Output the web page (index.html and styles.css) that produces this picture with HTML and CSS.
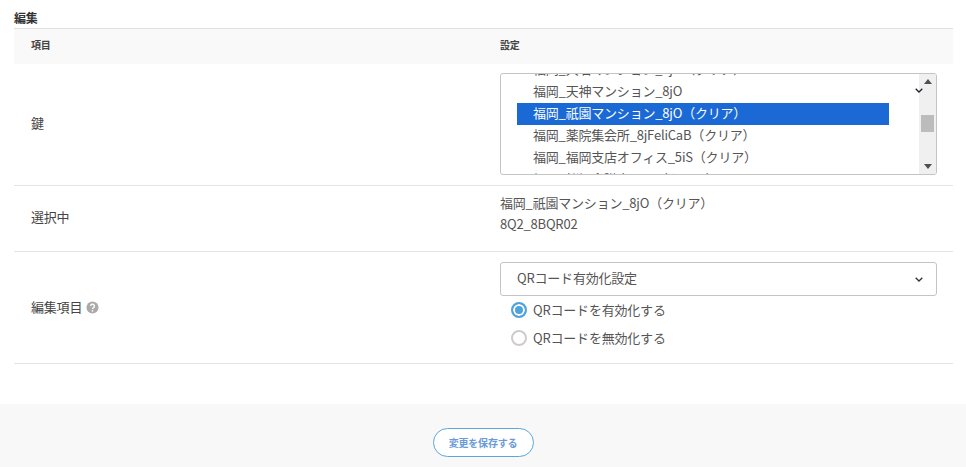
FILE: index.html
```html
<!DOCTYPE html>
<html lang="ja">
<head>
<meta charset="utf-8">
<title>編集</title>
<link rel="stylesheet" href="styles.css">
</head>
<body>
<main class="content">
  <h2 class="title">編集</h2>
  <div class="row head">
    <div class="label">項目</div>
    <div class="value">設定</div>
  </div>
  <div class="row row-key">
    <div class="label">鍵</div>
    <div class="value">
      <div class="listbox">
        <div class="list-view">
          <ul class="options">
            <li>福岡_大名マンション_8jO（クリア）</li>
            <li>福岡_天神マンション_8jO</li>
            <li class="selected">福岡_祇園マンション_8jO（クリア）</li>
            <li>福岡_薬院集会所_8jFeliCaB（クリア）</li>
            <li>福岡_福岡支店オフィス_5iS（クリア）</li>
            <li>福岡_桜坂会議室_5iS（クリア）</li>
          </ul>
        </div>
        <svg class="chev chev-list" viewBox="0 0 8 5"><path d="M.7.7L4 4 7.3.7" fill="none" stroke="#223" stroke-width="1.3"/></svg>
        <div class="scrollbar">
          <svg class="arrow" viewBox="0 0 8 5"><path d="M4 0l4 5H0z" fill="#505050"/></svg>
          <div class="track"><div class="thumb"></div></div>
          <svg class="arrow" viewBox="0 0 8 5"><path d="M0 0h8L4 5z" fill="#505050"/></svg>
        </div>
      </div>
    </div>
  </div>
  <div class="row row-selected">
    <div class="label">選択中</div>
    <div class="value">
      <p class="line">福岡_祇園マンション_8jO（クリア）</p>
      <p class="line">8Q2_8BQR02</p>
    </div>
  </div>
  <div class="row row-edit">
    <div class="label">編集項目
      <svg class="help" viewBox="0 0 14 14"><circle cx="7" cy="7" r="6.5" fill="#aaa"/><path d="M5 5.4a2 2 0 1 1 3.1 1.7c-.7.4-1.1.8-1.1 1.5" fill="none" stroke="#fff" stroke-width="1.5"/><circle cx="7" cy="10.6" r=".9" fill="#fff"/></svg>
    </div>
    <div class="value">
      <div class="select">
        <span class="select-text">QRコード有効化設定</span>
        <svg class="chev" viewBox="0 0 8 5"><path d="M.7.7L4 4 7.3.7" fill="none" stroke="#333" stroke-width="1.3"/></svg>
      </div>
      <div class="radio-row"><span class="radio on"></span><span class="radio-text">QRコードを有効化する</span></div>
      <div class="radio-row"><span class="radio"></span><span class="radio-text">QRコードを無効化する</span></div>
    </div>
  </div>
</main>
<footer class="footer">
  <button class="save" type="button">変更を保存する</button>
</footer>
</body>
</html>
```
FILE: styles.css
```css
* { box-sizing: border-box; }
html, body { margin: 0; padding: 0; }
body {
  width: 966px;
  height: 467px;
  overflow: hidden;
  background: #fff;
  color: #555;
  font-family: "Noto Sans CJK JP", "Noto Sans", sans-serif;
  font-size: 13px;
  letter-spacing: -0.2px;
}
.content { padding: 12px 13px 0 14px; height: 404px; }
.title {
  margin: 0;
  height: 17px;
  line-height: 11px;
  font-size: 12px;
  font-weight: 700;
  color: #333;
  border-bottom: 1px solid #e0e0e0;
}
.row {
  display: grid;
  grid-template-columns: 486px 437px;
  border-bottom: 1px solid #e4e4e4;
  align-items: center;
}
.label { padding-left: 17px; display: flex; align-items: center; gap: 4px; color: #444; margin-top: -4px; }
.head {
  height: 35px;
  background: #f9f9f9;
  border-bottom: 0;
  font-size: 10px;
  font-weight: 700;
}
.head .label, .head .value { color: #444; margin-top: -4px; }
.row-key { height: 122px; }
.row-selected { height: 66px; }
.row-edit { height: 112px; align-items: start; }
.row-edit .label { margin-top: 45px; }
.row-edit .value { padding-top: 10px; }
.row-selected .value { margin-top: -11px; }
.listbox {
  position: relative;
  display: flex;
  height: 102px;
  margin-top: -1px;
  border: 1px solid #c4c4c4;
  border-radius: 3px;
  overflow: hidden;
}
.list-view { flex: 1; overflow: hidden; padding: 0 30px 0 16px; }
.options { list-style: none; margin: -15px 0 0; padding: 0; }
.options li { height: 22px; line-height: 20px; padding-left: 16px; white-space: nowrap; }
.options .selected { background: #1a69d4; color: #fff; }
.chev { width: 8px; height: 5px; display: block; }
.chev-list { position: absolute; top: 14px; right: 13px; }
.scrollbar {
  width: 17px;
  background: #f0f0f0;
  display: flex;
  flex-direction: column;
  align-items: center;
}
.arrow { width: 8px; height: 5px; flex: none; margin: 5px 0; }
.track { flex: 1; width: 100%; padding: 26px 2px 0; }
.thumb { height: 17px; background: #bcbcbc; }
.line { margin: 0; line-height: 21px; }
.select {
  display: flex;
  justify-content: space-between;
  align-items: center;
  height: 34px;
  padding: 0 13px 0 16px;
  border: 1px solid #c4c4c4;
  border-radius: 3px;
}
.select-text { margin-top: -4px; }
.radio-row { display: flex; align-items: center; height: 28px; padding-left: 11px; gap: 6px; }
.radio-text { margin-top: -2px; }
.radio {
  width: 16px;
  height: 16px;
  border-radius: 50%;
  border: 2px solid #cfcbcb;
  background: #fff;
  flex: none;
}
.radio.on { border-color: #4fa3dc; box-shadow: inset 0 0 0 2px #fff; background: #4fa3dc; }
.help { width: 13px; height: 13px; margin-top: 2px; }
.footer {
  height: 63px;
  background: #f8f8f8;
  display: flex;
  justify-content: center;
  padding-top: 24px;
}
.save {
  width: 101px;
  height: 29px;
  background: #fff;
  border: 1px solid #5aa7dc;
  border-radius: 15px;
  color: #6a9bd8;
  font: 700 10px "Noto Sans CJK JP", sans-serif;
  letter-spacing: -0.2px;
  padding: 0;
}
```
